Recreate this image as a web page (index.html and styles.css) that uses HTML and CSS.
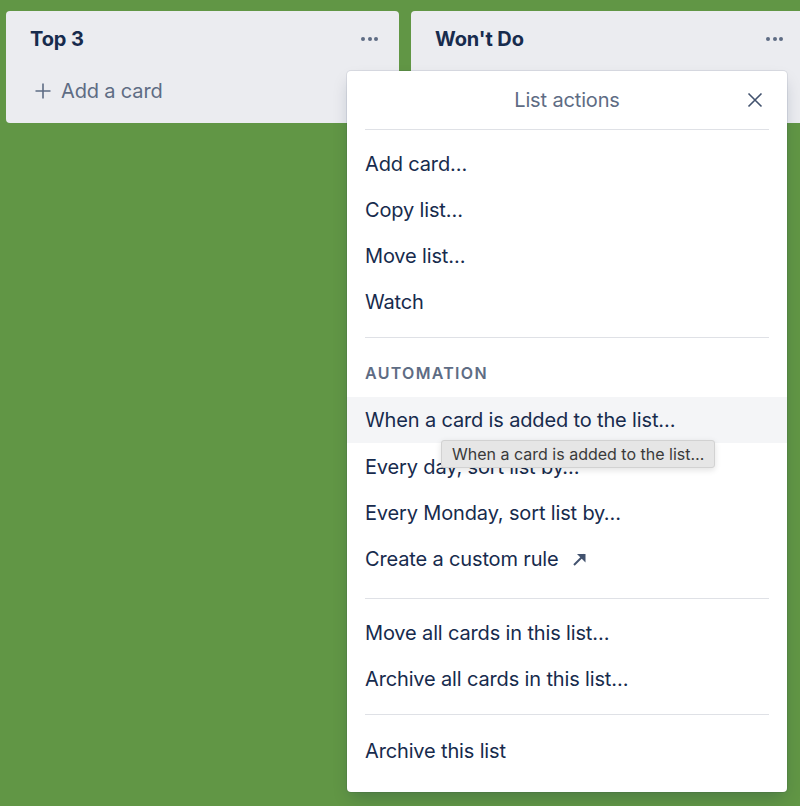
FILE: index.html
```html
<!DOCTYPE html>
<html lang="en">
<head>
<meta charset="utf-8">
<title>List actions</title>
<link rel="stylesheet" href="styles.css">
</head>
<body>
<div class="board">
  <div class="list">
    <div class="list-header">
      <h2 class="list-title">Top 3</h2>
      <span class="dots"><i></i><i></i><i></i></span>
    </div>
    <div class="add-card">
      <svg class="plus" width="16" height="16" viewBox="0 0 16 16"><path d="M8 0.5v15M0.5 8h15" stroke="#5e6c84" stroke-width="1.6" fill="none"/></svg>
      <span>Add a card</span>
    </div>
  </div>
  <div class="list">
    <div class="list-header">
      <h2 class="list-title">Won't Do</h2>
      <span class="dots"><i></i><i></i><i></i></span>
    </div>
    <div class="add-card placeholder"></div>
  </div>
</div>

<div class="popover">
  <div class="pop-header">
    <span class="pop-title">List actions</span>
    <svg class="close" width="16" height="16" viewBox="0 0 16 16"><path d="M1.5 1.5l13 13M14.5 1.5l-13 13" stroke="#42526e" stroke-width="1.6" fill="none"/></svg>
  </div>
  <div class="sep"></div>
  <ul class="menu first">
    <li>Add card…</li>
    <li>Copy list…</li>
    <li>Move list…</li>
    <li>Watch</li>
  </ul>
  <div class="sep"></div>
  <div class="section-title">Automation</div>
  <ul class="menu">
    <li class="hover">When a card is added to the list…</li>
    <li>Every day, sort list by…</li>
    <li>Every Monday, sort list by…</li>
    <li>Create a custom rule <svg class="ext" width="15" height="15" viewBox="0 0 15 15"><path d="M2 13L12.5 2.5" stroke="#42526e" stroke-width="2" fill="none"/><path d="M5 2h8.5v8.5z" fill="#42526e"/></svg></li>
  </ul>
  <div class="sep sep-b"></div>
  <ul class="menu">
    <li>Move all cards in this list…</li>
    <li>Archive all cards in this list…</li>
  </ul>
  <div class="sep"></div>
  <ul class="menu last">
    <li>Archive this list</li>
  </ul>
  <div class="tooltip">When a card is added to the list…</div>
</div>
</body>
</html>
```

FILE: styles.css
```css
* { box-sizing: border-box; }
html, body {
  margin: 0;
  padding: 0;
  background: #619645;
  height: 100%;
  overflow: hidden;
  font-family: Inter, "Noto Sans", sans-serif;
  color: #172b4d;
}
.board {
  display: flex;
  gap: 12px;
  padding: 11px 0 0 6px;
  align-items: flex-start;
}
.list {
  flex: 0 0 393px;
  background: #ebecf0;
  border-radius: 4px;
  height: 112px;
}
.list-header {
  display: flex;
  align-items: center;
  justify-content: space-between;
  padding: 0 21px 0 24px;
  height: 56px;
}
.list-title {
  margin: 0;
  font-size: 20px;
  font-weight: 700;
  color: #172b4d;
  letter-spacing: -0.1px;
}
.dots {
  display: flex;
  gap: 2.5px;
  padding-top: 0;
}
.dots i {
  display: block;
  width: 4px;
  height: 4px;
  border-radius: 50%;
  background: #5e6c84;
}
.add-card {
  display: flex;
  align-items: center;
  gap: 10px;
  padding: 0 0 0 29px;
  height: 48px;
  font-size: 20px;
  color: #5e6c84;
  letter-spacing: -0.15px;
}
.popover {
  position: absolute;
  left: 347px;
  top: 71px;
  width: 440px;
  height: 721px;
  background: #fff;
  border-radius: 4px;
  box-shadow: 0 8px 16px -4px rgba(9, 30, 66, 0.25), 0 0 0 1px rgba(9, 30, 66, 0.08);
}
.pop-header {
  position: relative;
  height: 58px;
  display: flex;
  align-items: center;
  justify-content: center;
}
.pop-title {
  font-size: 20px;
  color: #5e6c84;
  letter-spacing: -0.15px;
}
.close {
  position: absolute;
  right: 24px;
  top: 21px;
}
.sep {
  height: 1px;
  background: #dfe1e6;
  margin: 0 18px;
}
.menu {
  list-style: none;
  margin: 0;
  padding: 10px 0 13px;
}
.menu li {
  height: 46px;
  display: flex;
  align-items: center;
  padding: 2px 18px 0;
  font-size: 20px;
  letter-spacing: -0.15px;
  color: #172b4d;
}
.menu li.hover {
  background: #f4f5f7;
}
.ext {
  margin-left: 13px;
}
.section-title {
  font-size: 16px;
  font-weight: 600;
  letter-spacing: 1.3px;
  text-transform: uppercase;
  color: #5e6c84;
  padding: 25px 18px 14px;
  line-height: 20px;
}
.section-title + .menu {
  padding-top: 0;
  padding-bottom: 17px;
}
.section-title + .menu li:first-child {
  padding-top: 0;
}
.sep-b + .menu {
  padding-top: 10px;
  padding-bottom: 13px;
}
.menu.last {
  padding-top: 12px;
}
.tooltip {
  position: absolute;
  left: 94px;
  top: 369px;
  height: 28px;
  padding: 0 10px;
  display: flex;
  align-items: center;
  font-size: 16px;
  letter-spacing: 0;
  color: #3a3a3a;
  background: #e6e6e6;
  border: 1px solid #d2d2d2;
  border-radius: 3px;
  box-shadow: 0 2px 6px rgba(0, 0, 0, 0.12);
  white-space: nowrap;
}
```
